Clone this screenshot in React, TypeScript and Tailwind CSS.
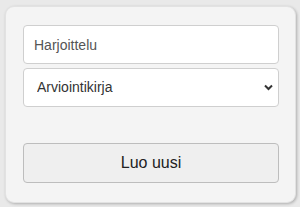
export default function App() {
  return (
    <div className="w-[300px] h-[207px] bg-[#e9e9e9] pt-[6px] pl-[5px] font-['Liberation_Sans',Arial,sans-serif]">
      <div className="w-[291px] h-[197px] bg-[#f4f4f4] rounded-[9px] border border-[#e2e2e2] shadow-[1px_1px_3px_rgba(0,0,0,0.25)] pt-[18px] pl-[17px] pr-[16px]">
        <div className="flex flex-col gap-[4px]">
          <input
            type="text"
            defaultValue="Harjoittelu"
            className="h-[39px] w-[256px] rounded-[4px] border border-[#cfcfcf] bg-white px-[10px] text-[14px] text-[#555] outline-none"
          />
          <div className="relative w-[256px]">
            <select
              defaultValue="Arviointikirja"
              className="h-[39px] w-full appearance-none rounded-[4px] border border-[#cfcfcf] bg-white pl-[13px] text-[14px] text-[#333] outline-none"
            >
              <option>Arviointikirja</option>
            </select>
            <svg
              className="pointer-events-none absolute right-[6px] top-[16px]"
              width="9"
              height="7"
              viewBox="0 0 9 7"
            >
              <path d="M1 1.5 L4.5 5 L8 1.5" fill="none" stroke="#333" strokeWidth="2" />
            </svg>
          </div>
        </div>
        <button className="mt-[36px] h-[40px] w-[256px] rounded-[4px] border border-[#bdbdbd] bg-[#efefef] text-[16px] text-[#222]">
          Luo uusi
        </button>
      </div>
    </div>
  );
}
